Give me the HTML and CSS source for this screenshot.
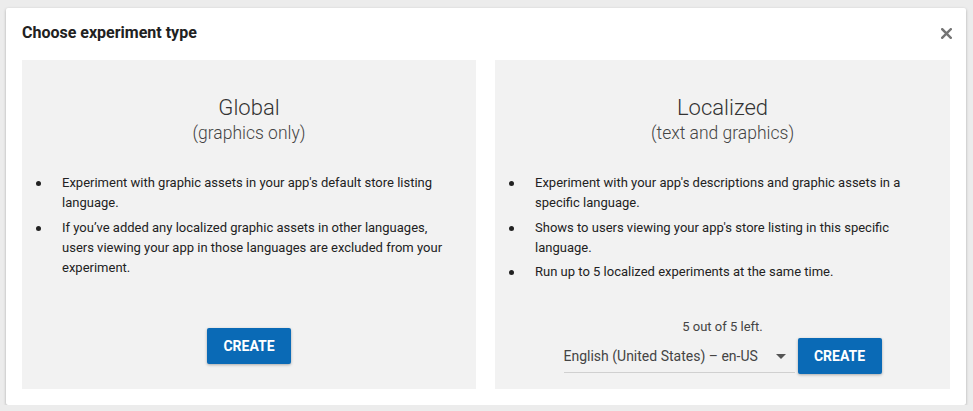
FILE: index.html
```html
<!DOCTYPE html>
<html>
<head>
<meta charset="utf-8">
<link rel="stylesheet" href="styles.css">
</head>
<body>
<div class="dialog">
  <div class="dialog-header">
    <h1 class="dialog-title">Choose experiment type</h1>
    <button class="close" aria-label="Close">
      <svg width="11" height="11" viewBox="0 0 11 11"><path d="M1.2 1.2 L9.8 9.8 M9.8 1.2 L1.2 9.8" stroke="#757575" stroke-width="2.4" stroke-linecap="square"/></svg>
    </button>
  </div>
  <div class="panels">
    <section class="panel">
      <div class="panel-head">
        <div class="panel-title">Global</div>
        <div class="panel-sub">(graphics only)</div>
      </div>
      <ul class="points">
        <li>Experiment with graphic assets in your app's default store listing language.</li>
        <li>If you’ve added any localized graphic assets in other languages, users viewing your app in those languages are excluded from your experiment.</li>
      </ul>
      <div class="panel-foot foot-global">
        <button class="btn">CREATE</button>
      </div>
    </section>
    <section class="panel">
      <div class="panel-head">
        <div class="panel-title">Localized</div>
        <div class="panel-sub">(text and graphics)</div>
      </div>
      <ul class="points">
        <li>Experiment with your app's descriptions and graphic assets in a specific language.</li>
        <li>Shows to users viewing your app's store listing in this specific language.</li>
        <li>Run up to 5 localized experiments at the same time.</li>
      </ul>
      <div class="panel-foot foot-local">
        <div class="count">5 out of 5 left.</div>
        <div class="row">
          <div class="select">
            <span class="select-text">English (United States) – en-US</span>
            <span class="caret"></span>
          </div>
          <button class="btn">CREATE</button>
        </div>
      </div>
    </section>
  </div>
</div>
</body>
</html>
```
FILE: styles.css
```css
html, body {
  margin: 0;
  padding: 0;
}
body {
  background: #ececec;
  font-family: Roboto, "Liberation Sans", sans-serif;
  color: #222;
  padding: 8px 7px 0 6px;
}
.dialog {
  background: #fff;
  height: 397px;
  box-sizing: border-box;
  padding: 0 16px 16px 16px;
  box-shadow: 0 1px 3px rgba(0,0,0,0.28);
  border-radius: 2px;
  display: flex;
  flex-direction: column;
}
.dialog-header {
  display: flex;
  align-items: center;
  justify-content: space-between;
  height: 52px;
  box-sizing: border-box;
  padding-bottom: 3px;
}
.dialog-title {
  margin: 0;
  font-size: 16px;
  font-weight: 700;
  color: #212121;
  line-height: 20px;
}
.close {
  border: 0;
  background: none;
  padding: 0;
  margin: 2px -2px 0 0;
  width: 11px;
  height: 11px;
  display: flex;
}
.panels {
  flex: 1;
  display: grid;
  grid-template-columns: 454px 455px;
  column-gap: 19px;
}
.panel {
  background: #f2f2f2;
  display: flex;
  flex-direction: column;
  padding: 35px 24px 0 16px;
}
.panel-head {
  text-align: center;
  margin-right: -8px;
}
.panel-title {
  font-size: 22px;
  font-weight: 300;
  line-height: 26px;
  color: #333;
}
.panel-sub {
  font-size: 17.5px;
  font-weight: 300;
  line-height: 22px;
  color: #444;
  margin-top: 1px;
}
.points {
  list-style: none;
  margin: 29px 0 0 0;
  padding: 0;
  font-size: 13px;
  line-height: 20px;
  color: #222;
}
.points li {
  display: flex;
  margin-bottom: 4.5px;
}
.points li::before {
  content: "";
  flex: none;
  width: 5px;
  height: 5px;
  border-radius: 50%;
  background: #222;
  margin: 8px 21.5px 0 -2.5px;
}
.panel-foot {
  margin-top: auto;
  display: flex;
  flex-direction: column;
  align-items: center;
  margin-right: -8px;
}
.foot-global {
  padding-bottom: 25px;
}
.foot-local {
  padding-bottom: 15px;
}
.btn {
  width: 84px;
  height: 36px;
  border: 0;
  border-radius: 2px;
  background: #0a6ab6;
  color: #fff;
  font-family: Roboto, "Liberation Sans", sans-serif;
  font-size: 14px;
  font-weight: 700;
  box-shadow: 0 1px 3px rgba(0,0,0,0.3);
  padding: 0;
}
.count {
  font-size: 13px;
  line-height: 20px;
  color: #444;
}
.row {
  display: flex;
  align-items: flex-start;
  gap: 3px;
  margin-top: 1px;
}
.select {
  width: 231px;
  height: 35px;
  box-sizing: border-box;
  border-bottom: 1px solid #d0d0d0;
  display: flex;
  align-items: center;
  justify-content: space-between;
  padding-top: 2px;
}
.select-text {
  font-size: 14px;
  color: #444;
}
.caret {
  width: 0;
  height: 0;
  border-left: 5px solid transparent;
  border-right: 5px solid transparent;
  border-top: 5px solid #555;
  margin-right: 9px;
}
```
